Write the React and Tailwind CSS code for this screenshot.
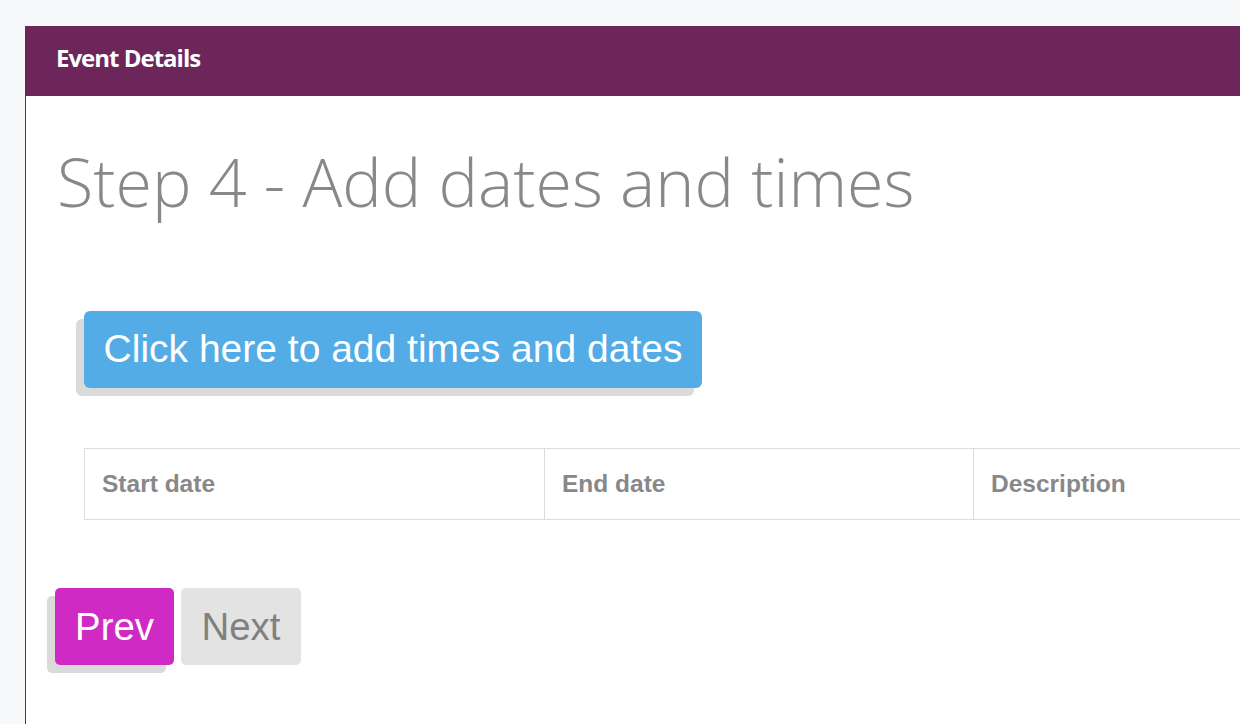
export default function App() {
  const cols = [
    { label: "Start date", w: "w-[460px]" },
    { label: "End date", w: "w-[429px]" },
    { label: "Description", w: "" },
  ];

  return (
    <div className="h-[724px] overflow-hidden bg-[#f8f9fb] pl-[25px] pt-[26px]">
      <div className="h-[760px] w-[1300px] border-l border-[#6d2659] bg-white">
        {/* header bar */}
        <div className="flex h-[70px] items-center bg-[#6d2659] pl-[30px] pb-[6px]">
          <h2 className="font-['Open_Sans',sans-serif] text-[24px] font-bold tracking-[-1px] text-white">
            Event Details
          </h2>
        </div>

        <div className="pl-[31px]">
          <h1 className="mt-[40px] font-['Open_Sans',sans-serif] text-[66.4px] font-light leading-[90px] text-[#888888]">
            Step 4 - Add dates and times
          </h1>

          <div className="mt-[85px] pl-[27px]">
            <button className="h-[77px] w-[618px] rounded-[6px] bg-[#53ace6] font-['Liberation_Sans',Arial,sans-serif] text-[39px] text-white shadow-[-8px_8px_0_#dadada]">
              Click here to add times and dates
            </button>
          </div>

          <table className="ml-[27px] mt-[60px] w-[1230px] border-collapse font-['Liberation_Sans',Arial,sans-serif]">
            <thead>
              <tr className="h-[71px]">
                {cols.map((c) => (
                  <th
                    key={c.label}
                    className={`${c.w} border border-[#dddddd] px-[17px] text-left text-[24.5px] font-bold text-[#888888]`}
                  >
                    {c.label}
                  </th>
                ))}
              </tr>
            </thead>
          </table>

          <div className="mt-[68px] flex gap-[7px]">
            <button className="-ml-[2px] h-[77px] w-[119px] rounded-[5px] bg-[#d02ac4] font-['Liberation_Sans',Arial,sans-serif] text-[38.4px] text-white shadow-[-8px_8px_0_#dadada]">
              Prev
            </button>
            <button className="h-[77px] w-[120px] rounded-[5px] bg-[#e3e3e3] font-['Liberation_Sans',Arial,sans-serif] text-[38.4px] text-[#808080]">
              Next
            </button>
          </div>
        </div>
      </div>
    </div>
  );
}
